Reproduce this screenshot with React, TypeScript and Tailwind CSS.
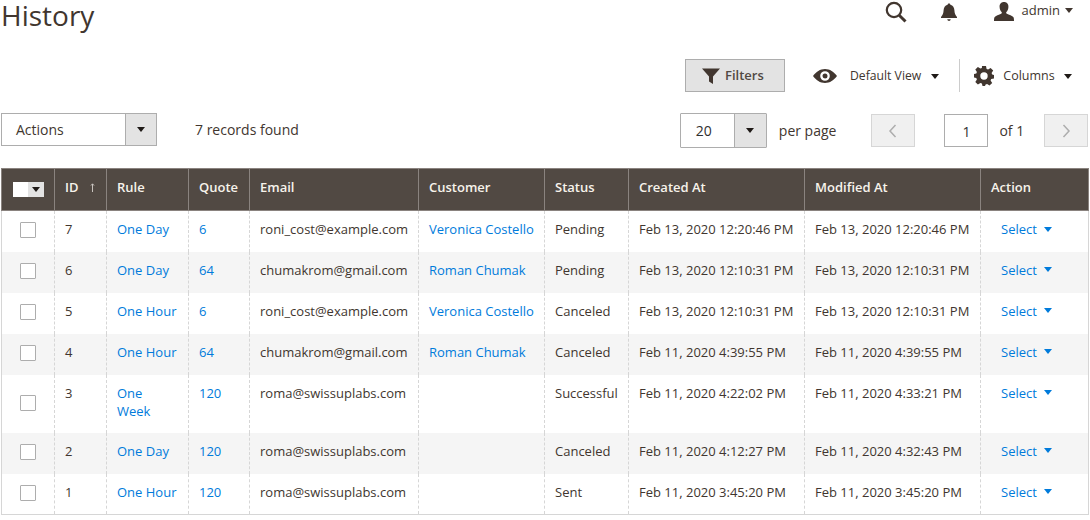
const rows = [
  { id: "7", rule: "One Day", quote: "6", email: "roni_cost@example.com", customer: "Veronica Costello", status: "Pending", created: "Feb 13, 2020 12:20:46 PM", modified: "Feb 13, 2020 12:20:46 PM" },
  { id: "6", rule: "One Day", quote: "64", email: "chumakrom@gmail.com", customer: "Roman Chumak", status: "Pending", created: "Feb 13, 2020 12:10:31 PM", modified: "Feb 13, 2020 12:10:31 PM" },
  { id: "5", rule: "One Hour", quote: "6", email: "roni_cost@example.com", customer: "Veronica Costello", status: "Canceled", created: "Feb 13, 2020 12:10:31 PM", modified: "Feb 13, 2020 12:10:31 PM" },
  { id: "4", rule: "One Hour", quote: "64", email: "chumakrom@gmail.com", customer: "Roman Chumak", status: "Canceled", created: "Feb 11, 2020 4:39:55 PM", modified: "Feb 11, 2020 4:39:55 PM" },
  { id: "3", rule: "One Week", quote: "120", email: "roma@swissuplabs.com", customer: "", status: "Successful", created: "Feb 11, 2020 4:22:02 PM", modified: "Feb 11, 2020 4:33:21 PM" },
  { id: "2", rule: "One Day", quote: "120", email: "roma@swissuplabs.com", customer: "", status: "Canceled", created: "Feb 11, 2020 4:12:27 PM", modified: "Feb 11, 2020 4:32:43 PM" },
  { id: "1", rule: "One Hour", quote: "120", email: "roma@swissuplabs.com", customer: "", status: "Sent", created: "Feb 11, 2020 3:45:20 PM", modified: "Feb 11, 2020 3:45:20 PM" },
];

const headers = ["Rule", "Quote", "Email", "Customer", "Status", "Created At", "Modified At", "Action"];
const widths = ["w-[53px]", "w-[52px]", "w-[82px]", "w-[61px]", "w-[169px]", "w-[126px]", "w-[84px]", "w-[176px]", "w-[176px]", "w-[108px]"];

function Caret({ className }: { className: string }) {
  return <span className={`inline-block h-0 w-0 border-x-[4px] border-t-[5px] border-x-transparent ${className}`} />;
}

function Td({ children }: { children?: React.ReactNode }) {
  return (
    <td className="border-l border-dashed border-[#d6d6d6] px-[10px] pt-[9px] pb-[13px] align-top leading-[18px]">
      {children}
    </td>
  );
}

export default function App() {
  return (
    <div className="h-[520px] w-[1090px] overflow-hidden bg-white font-['Open_Sans',sans-serif] text-[13px] text-[#41362f]">
      {/* top bar */}
      <div className="flex h-[59px] items-start">
        <h1 className="ml-[1px] text-[28px] leading-[30px] font-normal text-[#41362f]">History</h1>
        <div className="ml-auto flex items-center pr-[17px] pt-[1px]">
          <svg width="22" height="22" viewBox="0 0 22 22" fill="none" stroke="#41362f" className="mr-[33px]">
            <circle cx="9" cy="9" r="7.200" strokeWidth="2.200" />
            <path d="M14.200 14.200 20.500 20.500" strokeWidth="3" />
          </svg>
          <svg width="18" height="20" viewBox="0 0 18 20" fill="#41362f" className="mr-[35px]">
            <path d="M9 1.500c.8 0 1.300.5 1.400 1.200C13 3.400 14.300 5.600 14.400 8.300c.1 3 .9 5 2.600 6.700v1H1v-1c1.700-1.700 2.500-3.700 2.600-6.700C3.700 5.600 5 3.400 7.600 2.700 7.700 2 8.200 1.500 9 1.500Z" />
            <path d="M7.300 17.300h3.400C10.600 18.400 9.900 19 9 19s-1.600-.6-1.700-1.700Z" />
          </svg>
          <svg width="22" height="19" viewBox="0 0 20 19" fill="#41362f" className="mr-[7px] mb-[2px]">
            <path d="M10 0c3 0 4.600 2.200 4.400 5.200-.1 2-1 3.900-2 4.900-.4.500-.3 1.300.4 1.700 2 1 5.800 1.800 6.700 3.500.4.800.5 2.100.5 3.700H0c0-1.600.1-2.900.5-3.700.9-1.700 4.700-2.500 6.700-3.500.7-.4.800-1.200.4-1.700-1-1-1.900-2.900-2-4.900C5.400 2.200 7 0 10 0Z" />
          </svg>
          <span className="mr-[5px] mb-[4px] leading-[18px]">admin</span>
          <Caret className="mb-[3px] border-t-[#41362f]" />
        </div>
      </div>

      {/* filters row */}
      <div className="flex h-[54px] items-start">
        <button className="ml-[685px] flex h-[33px] w-[100px] items-center gap-[5px] border border-[#adadad] bg-[#e3e3e3] pl-[16px] font-semibold text-[#514943]">
          <svg width="18" height="18" viewBox="0 0 18 18" fill="#41362f">
            <path d="M0 1.500h18L11 9.500V17L7 14.500V9.500Z" />
          </svg>
          Filters
        </button>
        <div className="ml-[28px] flex h-[33px] items-center">
          <svg width="24" height="14" viewBox="0 0 24 14" fill="#41362f" className="mr-[13px]">
            <path fillRule="evenodd" d="M12 0c4.800 0 9 2.800 12 7-3 4.200-7.200 7-12 7S3 11.200 0 7c3-4.200 7.200-7 12-7Zm0 2.200A4.800 4.800 0 1 0 12 11.800 4.800 4.800 0 0 0 12 2.200Zm0 2.300a2.500 2.500 0 1 1 0 5 2.500 2.500 0 0 1 0-5Z" />
          </svg>
          <span className="mr-[10px] mt-[2px] text-[12.200px]">Default View</span>
          <Caret className="mt-[2px] border-t-[#1f1a17]" />
        </div>
        <div className="ml-[20px] flex h-[33px] items-center border-l border-[#ccc] pl-[14px]">
          <svg width="20" height="20" viewBox="0 0 20 20" fill="#41362f" className="mr-[9px]">
            <path fillRule="evenodd" d="M8 0h4l.6 2.900 1.500.6 2.500-1.600 2.600 2.700-1.600 2.400.6 1.500L20 9v3.500l-2.800.6-.6 1.500 1.600 2.500-2.700 2.500-2.400-1.600-1.500.6L11 20H8.500l-.6-2.400-1.500-.6-2.500 1.600L1.300 16l1.600-2.400-.6-1.500L0 11.500V8l2.300-.6.6-1.500L1.300 3.500 3.900 1l2.500 1.600 1.500-.6ZM10 6.300a3.700 3.700 0 1 0 0 7.400 3.700 3.700 0 0 0 0-7.400Z" />
          </svg>
          <span className="mr-[9px] mt-[1px] text-[12.500px]">Columns</span>
          <Caret className="mt-[2px] border-t-[#1f1a17]" />
        </div>
      </div>

      {/* toolbar */}
      <div className="flex h-[55px] items-start text-[14px]">
        <div className="ml-[1px] flex h-[33px] w-[156px] border border-[#adadad]">
          <span className="flex-1 pl-[14px] leading-[31px]">Actions</span>
          <span className="flex w-[31px] items-center justify-center border-l border-[#adadad] bg-[#e3e3e3]">
            <Caret className="border-t-[#1f1a17]" />
          </span>
        </div>
        <span className="ml-[38px] leading-[33px]">7 records found</span>
        <div className="ml-[381px] flex h-[35px] w-[87px] rounded-[1px] border border-[#adadad]">
          <span className="w-[53px] pl-[15px] leading-[34px] text-[#303030]">20</span>
          <span className="flex flex-1 items-center justify-center border-l border-[#adadad] bg-[#e3e3e3]">
            <Caret className="border-t-[#1f1a17]" />
          </span>
        </div>
        <span className="ml-[12px] leading-[35px]">per page</span>
        <div className="ml-[35px] mt-[1px] flex h-[33px] w-[44px] items-center justify-center border border-[#d6d6d6] bg-[#f0f0f0]">
          <svg width="10" height="14" viewBox="0 0 10 14" fill="none" stroke="#adadad" strokeWidth="1.500"><path d="M7.500 1 2 7l5.500 6" /></svg>
        </div>
        <div className="ml-[29px] mt-[1px] h-[33px] w-[44px] border border-[#adadad] text-center leading-[33px] text-[#303030]">1</div>
        <span className="ml-[11px] leading-[35px]">of 1</span>
        <div className="ml-[20px] mt-[1px] flex h-[33px] w-[44px] items-center justify-center border border-[#d6d6d6] bg-[#f0f0f0]">
          <svg width="10" height="14" viewBox="0 0 10 14" fill="none" stroke="#adadad" strokeWidth="1.500"><path d="M2.500 1 8 7l-5.500 6" /></svg>
        </div>
      </div>

      {/* grid */}
      <table className="ml-[1px] w-[1087px] table-fixed border-collapse border-b border-[#d6d6d6]">
        <colgroup>
          {widths.map((w, i) => (
            <col key={i} className={w} />
          ))}
        </colgroup>
        <thead>
          <tr className="h-[42px] bg-[#514943] text-left font-semibold text-[#f7f3eb]">
            <th className="border border-[#8a837f] px-0">
              <div className="ml-[11px] flex h-[15px] w-[31px]">
                <span className="w-[15px] bg-white" />
                <span className="flex flex-1 items-center justify-center bg-[#e3e3e3]">
                  <Caret className="border-t-[#1f1a17]" />
                </span>
              </div>
            </th>
            <th className="border border-[#8a837f] px-[10px] pb-[4px] font-semibold">
              <span className="flex items-center justify-between pr-[1px]">
                ID
                <svg width="5" height="9" viewBox="0 0 5 9" fill="none" stroke="#c9c4bf"><path d="M2.500 9V1M1 2.500 2.500 .8 4 2.500" /></svg>
              </span>
            </th>
            {headers.map((h) => (
              <th key={h} className="border border-[#8a837f] px-[10px] pb-[4px] font-semibold">{h}</th>
            ))}
          </tr>
        </thead>
        <tbody>
          {rows.map((r, i) => (
            <tr key={r.id} className={`h-[41px] ${i % 2 === 1 ? "bg-[#f5f5f5]" : "bg-white"}`}>
              <td className="border-l border-[#d6d6d6] align-middle">
                <span className="ml-[18px] mb-[2px] block h-[16px] w-[16px] rounded-[1px] border border-[#adadad] bg-white" />
              </td>
              <Td>{r.id}</Td>
              <Td><a className="text-[#007bdb]">{r.rule}</a></Td>
              <Td><a className="text-[#007bdb]">{r.quote}</a></Td>
              <Td>{r.email}</Td>
              <Td><a className="text-[#007bdb]">{r.customer}</a></Td>
              <Td>{r.status}</Td>
              <Td>{r.created}</Td>
              <Td>{r.modified}</Td>
              <td className="border-r border-l border-[#d6d6d6] [border-left-style:dashed] pt-[9px] pb-[13px] pl-[20px] align-top leading-[18px] text-[#007bdb]">
                <span className="inline-flex items-center gap-[7px]">
                  Select
                  <Caret className="border-t-[#007bdb]" />
                </span>
              </td>
            </tr>
          ))}
        </tbody>
      </table>
    </div>
  );
}
